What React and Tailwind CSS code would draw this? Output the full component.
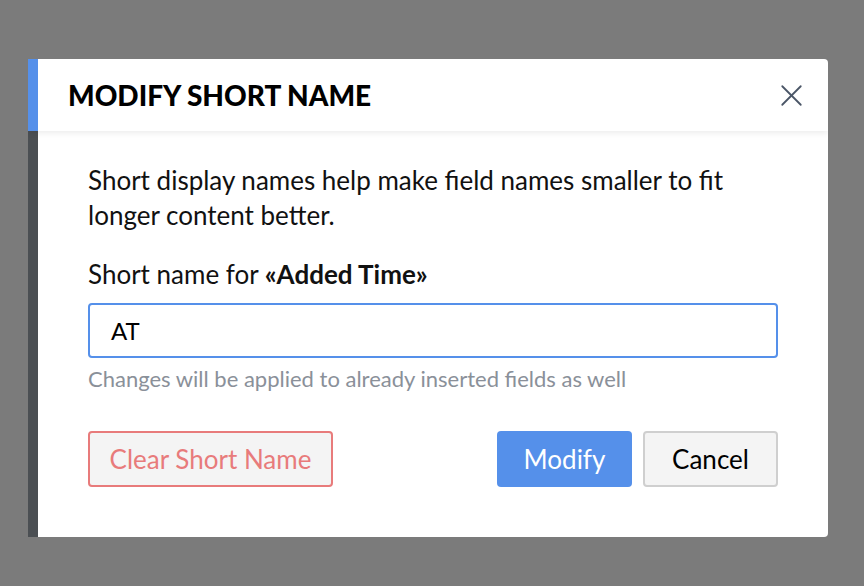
import { X } from 'lucide-react';

export default function App() {
  return (
    <div className="w-[864px] h-[586px] bg-[#7b7b7b] pl-[28px] pt-[59px]" style={{ fontFamily: 'Lato, "Open Sans", sans-serif' }}>
      <div className="w-[800px] bg-white rounded-r-[4px] overflow-hidden">
        <div className="h-[72px] flex items-center justify-between border-l-[10px] border-[#5590ea] pl-[30px] pr-[18px] shadow-[0_2px_6px_rgba(0,0,0,0.08)] relative z-10">
          <h1 className="text-[28px] font-black text-black">MODIFY SHORT NAME</h1>
          <X className="w-[37px] h-[37px] text-[#4a5566]" strokeWidth={1.15} />
        </div>
        <div className="border-l-[10px] border-[#4b4f53] px-[50px] pt-[32px] pb-[50px]">
          <p className="text-[26px] leading-[35px] text-[#111]">
            Short display names help make field names smaller to fit longer content better.
          </p>
          <p className="text-[26px] leading-[35px] text-[#111] mt-[24px]">
            Short name for <span className="font-bold">«Added Time»</span>
          </p>
          <div className="mt-[11px] h-[55px] border-2 border-[#5590ea] rounded-[4px] flex items-center pl-[21px] text-[24px] text-black">
            AT
          </div>
          <p className="mt-[8px] text-[22px] leading-[26px] text-[#8a9099]">
            Changes will be applied to already inserted fields as well
          </p>
          <div className="mt-[39px] flex items-center">
            <button className="h-[56px] w-[245px] border-2 border-[#e87b7b] bg-[#f4f4f4] text-[#e87b7b] rounded-[4px] text-[26px]">
              Clear Short Name
            </button>
            <div className="flex-1" />
            <button className="h-[56px] w-[135px] bg-[#5590ea] text-white rounded-[4px] text-[26px]">
              Modify
            </button>
            <button className="ml-[11px] h-[56px] w-[135px] border-2 border-[#cfcfcf] bg-[#f4f4f4] text-black rounded-[4px] text-[26px]">
              Cancel
            </button>
          </div>
        </div>
      </div>
    </div>
  );
}
